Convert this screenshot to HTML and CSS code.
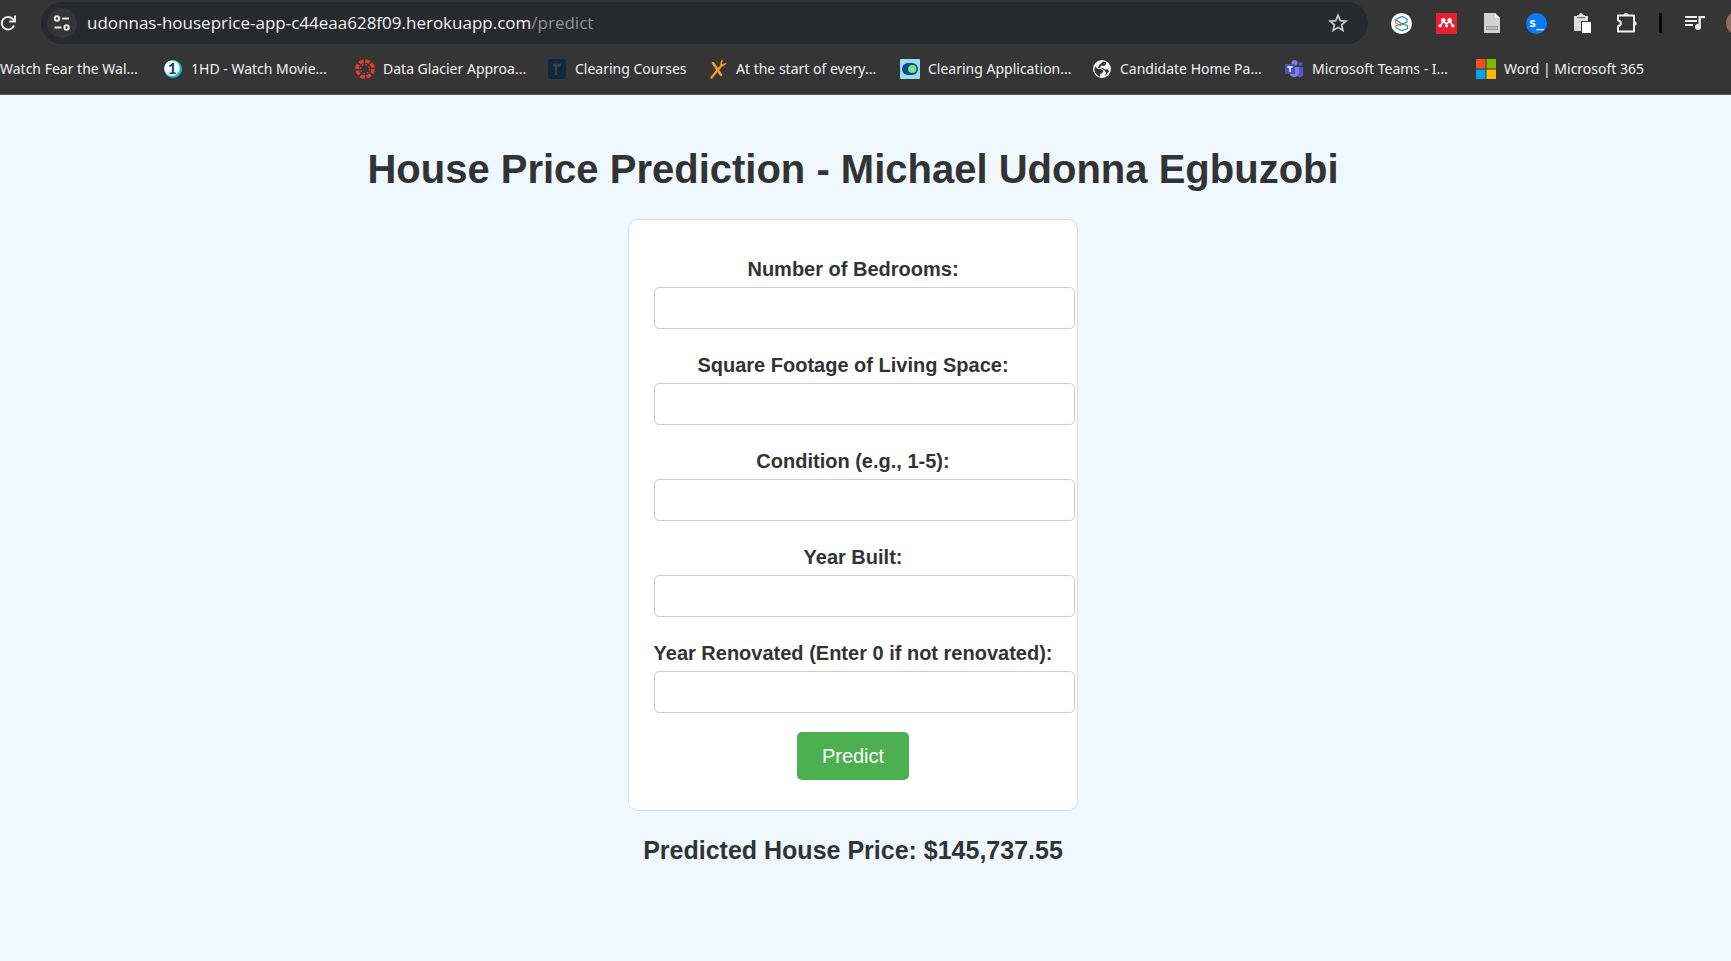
FILE: index.html
```html
<!DOCTYPE html>
<html lang="en">
<head>
<meta charset="utf-8">
<title>House Price Prediction</title>
<link rel="stylesheet" href="styles.css">
</head>
<body>
<header class="browser">
  <div class="toolbar">
    <button class="reload" type="button" aria-label="Reload">
      <svg width="16" height="20" viewBox="0 0 16 20" fill="none" stroke="#e8e8e8" stroke-width="2"><path d="M14 12.500A6.300 6.300 0 1 1 12.600 5.800L15 8"/><path d="M15 2.500v6H9.200"/></svg>
    </button>
    <div class="omnibox">
      <button class="site-info" type="button" aria-label="Site information">
        <svg width="18" height="18" viewBox="0 0 18 18" fill="none" stroke="#e8e8e8" stroke-width="2"><circle cx="4" cy="4.500" r="2.200"/><path d="M9 4.500h7M1.500 13.500h7"/><circle cx="13.600" cy="13.500" r="2.200"/></svg>
      </button>
      <div class="url">udonnas-houseprice-app-c44eaa628f09.herokuapp.com<span class="path">/predict</span></div>
      <button class="star" type="button" aria-label="Bookmark this page">
        <svg width="20" height="20" viewBox="0 0 20 20" fill="none" stroke="#c9c9c9" stroke-width="1.700"><path d="M10 2.300l2.200 5.300 5.700.5-4.300 3.700 1.300 5.600-4.900-3-4.900 3 1.300-5.600L2.100 8.100l5.700-.5z"/></svg>
      </button>
    </div>
    <div class="extensions">
      <button type="button" aria-label="Scholar extension"><svg width="21" height="21" viewBox="0 0 21 21" fill="none" stroke-width="1.200"><circle cx="10.500" cy="10.500" r="10.500" fill="#fff"/><path d="M4.500 6.500L11 3.500l5 2.500v3l-5 2-6.500-4.500z" stroke="#2a8c9c"/><path d="M4.500 6.500v3.500l6 3" stroke="#e08a3c"/><path d="M11 11l5.500 1.500v3L11 17.500 5 15" stroke="#2a9c8c"/><path d="M5 15v-2.500l6-1.500" stroke="#c9603a"/></svg></button>
      <button type="button" aria-label="Mendeley"><svg width="21" height="21" viewBox="0 0 21 21"><path fill="#e9202f" d="M0 0h21v21H0z"/><g fill="#fff"><circle cx="7.300" cy="7.300" r="2.200"/><circle cx="13.700" cy="7.300" r="2.200"/><circle cx="4" cy="12.800" r="1.600"/><circle cx="17" cy="12.800" r="1.600"/><circle cx="10.500" cy="12.800" r="1.600"/></g><path d="M4 13c2 0 1-4 3.200-4s2 1.500 3.300 1.500 1.100-1.500 3.300-1.500S15 13 17 13" fill="none" stroke="#fff" stroke-width="1.700"/></svg></button>
      <button type="button" aria-label="Reader"><svg width="18" height="20" viewBox="0 0 18 20"><path fill="#d2d2d2" d="M1 0h11l5 5v15H1z"/><path fill="#f4f4f4" d="M12 0v5h5z"/><path fill="#999" d="M3 13h12v4H3z"/><path fill="#bcbcbc" d="M4 14h10v2H4z"/></svg></button>
      <button type="button" aria-label="Terminal extension"><svg width="21" height="21" viewBox="0 0 21 21"><circle cx="10.500" cy="10.500" r="10.500" fill="#087bff"/><text x="3" y="14" class="prompt">s_</text></svg></button>
      <button type="button" aria-label="Clipboard"><svg width="20" height="20" viewBox="0 0 20 20"><path fill="#ddd" d="M2 3h3V2h2a2 2 0 0 1 4 0h2v1h3v5H9v10H2z"/><path fill="#777" d="M5 4h8v1.200H5z"/><path fill="#fff" d="M10 9h9v11h-9z"/></svg></button>
      <button type="button" aria-label="Extensions"><svg width="22" height="22" viewBox="0 0 22 22" fill="none" stroke="#f0f0f0" stroke-width="2" stroke-linejoin="round"><path d="M2 3.500h16v16H2v-5.400a2.800 2.800 0 0 0 0-5.600z"/><path d="M8 3a2 1.700 0 0 1 4 0zM18.500 9.500a1.700 2 0 0 1 0 4z" fill="#f0f0f0" stroke-width="1"/></svg></button>
      <span class="divider"></span>
      <button type="button" aria-label="Media controls"><svg width="20" height="16" viewBox="0 0 20 16"><path fill="#f0f0f0" d="M0 1h12v2H0zm0 4h12v2H0zm0 4h8v2H0z"/><path fill="#f0f0f0" d="M13.500 1H20v2.200h-4.200v8.500h-2.300z"/><circle cx="13" cy="12" r="3" fill="#f0f0f0"/></svg></button>
      <span class="avatar"></span>
    </div>
  </div>
  <nav class="bookmarks" aria-label="Bookmarks">
    <a class="bookmark first" href="#">Watch Fear the Wal...</a>
    <a class="bookmark" href="#"><svg width="20" height="20" viewBox="0 0 20 20"><circle cx="10" cy="10" r="9" fill="#18b8d4"/><circle cx="9" cy="9.300" r="7.700" fill="#f4fbff"/><text x="5" y="15" class="one">1</text></svg>1HD - Watch Movie...</a>
    <a class="bookmark" href="#"><svg width="20" height="20" viewBox="0 0 20 20"><circle cx="10" cy="10" r="8" fill="none" stroke="#e23f2b" stroke-width="3.600" stroke-dasharray="4.600 1.683"/><circle cx="10" cy="10" r="4.500" fill="none" stroke="#e23f2b" stroke-width="1.400" stroke-dasharray="1.500 2.034"/></svg>Data Glacier Approa...</a>
    <a class="bookmark short" href="#"><svg width="20" height="20" viewBox="0 0 20 20"><rect x="1" width="18" height="20" rx="3" fill="#10293c"/><path d="M6 4l2 1 1-1 2 1 3-1v3l-3 1-1 1v5l1 2H7l1-2V8L6 7z" fill="#32424f"/></svg>Clearing Courses</a>
    <a class="bookmark" href="#"><svg width="20" height="20" viewBox="0 0 20 20" fill="none" stroke="#f29a24" stroke-linecap="round"><path d="M3.500 18.500L14 6" stroke-width="2.400"/><path d="M5 4l8 12" stroke-width="2.600"/><path d="M14 1.500l-1 3.500 2 1.500 2.500-2" stroke-width="1.600"/></svg>At the start of every...</a>
    <a class="bookmark" href="#"><svg width="20" height="20" viewBox="0 0 20 20"><rect width="20" height="20" rx="1" fill="#9edcec"/><rect x="2" y="4" width="16" height="12" rx="6" fill="#064a92"/><circle cx="12.300" cy="10" r="4.100" fill="#7ee878"/></svg>Clearing Application...</a>
    <a class="bookmark" href="#"><svg width="20" height="20" viewBox="0 0 20 20"><circle cx="10" cy="10" r="9" fill="#f5f5f5"/><path d="M3 7.500l3 2.500h3l2.500 2-1.500 2.500H8.500L8 17.800A8 8 0 0 1 3 7.500zM11 2.500l3 1v2l-2 1.500-3-.5-1 2 3 .5 2 1.500h3l1 2-3 3.500-1 .5 1-3-2-2.500-3-2H6l1-3 2-1.500z" fill="#353535"/></svg>Candidate Home Pa...</a>
    <a class="bookmark" href="#"><svg width="20" height="20" viewBox="0 0 20 20"><circle cx="10.500" cy="4" r="3" fill="#7b83eb"/><circle cx="16.500" cy="5" r="2" fill="#5059c9"/><path fill="#5059c9" d="M13 8h6v6a3 3 0 0 1-6 2z"/><path fill="#7b83eb" d="M6 8h9v6a5 5 0 0 1-9 2z"/><rect x="1" y="5" width="10" height="10" rx="1" fill="#4b53bc"/><path d="M3.500 8h5M6 8v5" stroke="#fff" stroke-width="1.500"/></svg>Microsoft Teams - I...</a>
    <a class="bookmark" href="#"><svg width="20" height="20" viewBox="0 0 20 20"><path fill="#f25022" d="M0 0h9.500v9.500H0z"/><path fill="#7fba00" d="M10.500 0H20v9.500h-9.500z"/><path fill="#00a4ef" d="M0 10.500h9.500V20H0z"/><path fill="#ffb900" d="M10.500 10.500H20V20h-9.500z"/></svg>Word | Microsoft 365</a>
  </nav>
</header>
<main class="page">
  <h1 class="title">House Price Prediction - Michael Udonna Egbuzobi</h1>
  <form class="card">
    <label for="bedrooms">Number of Bedrooms:</label>
    <input id="bedrooms" type="text">
    <label for="sqft">Square Footage of Living Space:</label>
    <input id="sqft" type="text">
    <label for="condition">Condition (e.g., 1-5):</label>
    <input id="condition" type="text">
    <label for="built">Year Built:</label>
    <input id="built" type="text">
    <label for="renovated">Year Renovated (Enter 0 if not renovated):</label>
    <input id="renovated" type="text">
    <button class="predict" type="button">Predict</button>
  </form>
  <h2 class="result">Predicted House Price: $145,737.55</h2>
</main>
</body>
</html>
```
FILE: styles.css
```css
* { box-sizing: border-box; }

body {
  margin: 0;
  min-height: 100vh;
  background: #eff8ff;
  color: #333;
  font-family: "Liberation Sans", Arial, sans-serif;
  overflow-x: hidden;
}

/* Browser bars */
.browser {
  background: #353535;
  border-bottom: 1px solid #5c5c5c;
  font-family: "Noto Sans", "Open Sans", sans-serif;
  overflow: hidden;
}
.browser button {
  display: flex;
  align-items: center;
  justify-content: center;
  flex: none;
  padding: 0;
  border: 0;
  background: none;
}
.browser svg { flex: none; display: block; }
.toolbar {
  display: flex;
  align-items: center;
  padding-top: 2px;
}
.toolbar .reload {
  width: 41px;
  justify-content: flex-start;
}
.omnibox {
  display: flex;
  align-items: center;
  flex: 1;
  min-width: 0;
  height: 42px;
  padding: 0 20px 0 6px;
  border-radius: 21px;
  background: #28292c;
}
.omnibox .site-info {
  width: 30px;
  height: 30px;
  border-radius: 50%;
  background: #353535;
}
.url {
  flex: 1;
  min-width: 0;
  margin-left: 10px;
  overflow: hidden;
  white-space: nowrap;
  color: #f2f2f2;
  font-family: "Open Sans", "Noto Sans", sans-serif;
  font-size: 17px;
  line-height: 24px;
}
.path { color: #929292; }
.extensions {
  display: flex;
  align-items: center;
  flex: none;
  width: 363px;
  padding-left: 11px;
  overflow: hidden;
}
.extensions button {
  width: 45px;
  height: 30px;
}
.divider {
  flex: none;
  width: 3px;
  height: 20px;
  margin: 0 10px;
  background: #080808;
}
.avatar {
  flex: none;
  width: 24px;
  height: 24px;
  margin-left: 9px;
  border-radius: 50%;
  background: #8d6e63;
}
.prompt {
  fill: #fff;
  font: bold 12px "DejaVu Sans Mono", monospace;
}
.one {
  fill: #123a5c;
  font: bold 15px Lato, sans-serif;
}
.bookmarks {
  display: flex;
  align-items: center;
  height: 50px;
}
.bookmark {
  display: flex;
  align-items: center;
  flex: none;
  gap: 8px;
  width: 192px;
  color: #f2f2f2;
  font-size: 14px;
  line-height: 20px;
  white-space: nowrap;
  text-decoration: none;
}
.bookmark.first { width: 163px; }
.bookmark.short { width: 161px; }

/* Prediction form */
.page {
  display: flex;
  flex-direction: column;
  align-items: center;
  padding: 50px 25px 50px 0;
}
.title {
  margin: 0;
  font-size: 40px;
  line-height: 48px;
  text-align: center;
}
.card {
  display: flex;
  flex-direction: column;
  align-items: center;
  width: 450px;
  max-width: 100%;
  margin: 26px 0 24px;
  padding: 25px 25px 30px;
  border: 1px solid #ddd;
  border-radius: 10px;
  background: #fff;
}
.card label {
  margin-top: 12px;
  font-size: 20px;
  font-weight: bold;
  line-height: 24px;
  white-space: nowrap;
}
.card input {
  align-self: flex-start;
  width: calc(100% + 23px);
  height: 42px;
  margin: 6px 0 12px;
  padding: 10px;
  border: 1px solid #ccc;
  border-radius: 5px;
  background: #fff;
  font-size: 17px;
}
.predict {
  height: 48px;
  margin-top: 7px;
  padding: 0 25px;
  border: 0;
  border-radius: 5px;
  background: #4caf50;
  color: #fff;
  font-family: inherit;
  font-size: 20px;
}
.result {
  margin: 0;
  font-size: 25px;
  line-height: 30px;
  text-align: center;
}
```
